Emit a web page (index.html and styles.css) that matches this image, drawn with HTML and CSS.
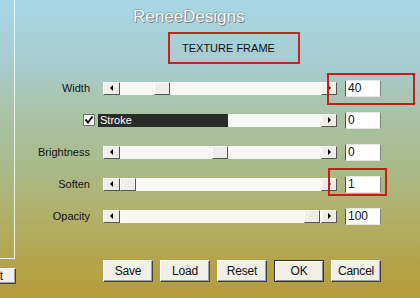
FILE: index.html
```html
<!DOCTYPE html>
<html>
<head lang="en">
    <meta charset="UTF-8">
    <title>Texture Frame</title>
    <link rel="stylesheet" href="styles.css">
</head>
<body>

<div class="window">
    <!--左侧预览区，只露出一点-->
    <div class="side">
        <div class="preview"></div>
        <button class="btn side-btn">Edit</button>
    </div>

    <div class="main">
        <div class="head">
            <div class="brand">ReneeDesigns</div>
            <div class="frame-title">TEXTURE FRAME</div>
        </div>

        <div class="rows">
            <div class="row">
                <span class="label">Width</span>
                <div class="slider">
                    <span class="arrow left"></span>
                    <div class="track"><span class="thumb" style="margin-left:34px"></span></div>
                    <span class="arrow right"></span>
                </div>
                <span class="field">40</span>
            </div>
            <div class="row">
                <span class="label">
                    <svg class="check" width="12" height="12" viewBox="0 0 12 12">
                        <rect x="0.5" y="0.5" width="11" height="11" fill="#fff" stroke="#707070"/>
                        <path d="M2.5 5.5 L5 8.5 L9.5 2.5" fill="none" stroke="#000" stroke-width="2"/>
                    </svg>
                </span>
                <div class="slider">
                    <span class="stroke-bar">Stroke</span>
                    <div class="track"></div>
                    <span class="arrow right"></span>
                </div>
                <span class="field">0</span>
            </div>
            <div class="row">
                <span class="label">Brightness</span>
                <div class="slider">
                    <span class="arrow left"></span>
                    <div class="track"><span class="thumb" style="margin-left:92px"></span></div>
                    <span class="arrow right"></span>
                </div>
                <span class="field">0</span>
            </div>
            <div class="row">
                <span class="label">Soften</span>
                <div class="slider">
                    <span class="arrow left"></span>
                    <div class="track"><span class="thumb" style="margin-left:0px"></span></div>
                    <span class="arrow right"></span>
                </div>
                <span class="field">1</span>
            </div>
            <div class="row">
                <span class="label">Opacity</span>
                <div class="slider">
                    <span class="arrow left"></span>
                    <div class="track"><span class="thumb" style="margin-left:184px"></span></div>
                    <span class="arrow right"></span>
                </div>
                <span class="field">100</span>
            </div>
        </div>

        <div class="buttons">
            <button class="btn">Save</button>
            <button class="btn">Load</button>
            <button class="btn">Reset</button>
            <button class="btn default">OK</button>
            <button class="btn">Cancel</button>
        </div>
    </div>

    <!--红框标注-->
    <div class="mark mark-width"></div>
    <div class="mark mark-soften"></div>
</div>

</body>
</html>
```

FILE: styles.css
```css
body {
    margin: 0;
}

.window {
    position: relative;
    display: flex;
    width: 420px;
    height: 298px;
    overflow: hidden;
    font-family: "Liberation Sans", Arial, sans-serif;
    color: #111;
    background: linear-gradient(180deg, #a7d7e5 0%, #a8cdd2 20%, #a9c3a7 38%, #aaba8c 55%, #b0b16a 72%, #b3a44a 88%, #b49c3a 100%);
}

/* 通用按钮 */
.btn {
    box-sizing: border-box;
    padding: 0;
    font: 12px "Liberation Sans", Arial, sans-serif;
    letter-spacing: -0.2px;
    color: #111;
    background: #f0efe8;
    border: 1px solid;
    border-color: #fff #404040 #404040 #fff;
    box-shadow: inset -1px -1px #a0a0a0;
}

/* 左侧 */
.side {
    display: flex;
    flex-direction: column;
    width: 16px;
    flex: none;
}

.preview {
    width: 14px;
    height: 258px;
    border-right: 1px solid #eef2ec;
    border-bottom: 1px solid #eef2ec;
}

.side-btn {
    width: 44px;
    height: 16px;
    margin: 9px 0 0 -28px;
    padding-right: 12px;
    text-align: right;
}

/* 主区 */
.main {
    flex: 1;
    display: flex;
    flex-direction: column;
}

.head {
    height: 72px;
}

.brand {
    margin: 0 0 0 117px;
    padding-top: 7px;
    font-size: 17px;
    line-height: 20px;
    color: #f6f6f4;
    text-shadow: 1px 1px 0 #7c8686, -1px 0 0 rgba(110, 120, 120, 0.45), 0 -1px 0 rgba(110, 120, 120, 0.35);
}

.frame-title {
    box-sizing: border-box;
    width: 132px;
    height: 32px;
    margin: 5px 0 0 152px;
    padding-left: 12px;
    font-size: 11px;
    line-height: 28px;
    border: 2px solid #c2261c;
}

.row {
    display: flex;
    align-items: center;
    height: 32px;
}

.label {
    display: flex;
    justify-content: flex-end;
    width: 74px;
    margin-right: 13px;
    font-size: 11px;
}

.check {
    margin-right: -5px;
}

.slider {
    display: flex;
    width: 234px;
    height: 13px;
    background: #f7f7f6;
}

.track {
    flex: 1;
    display: flex;
}

.arrow,
.thumb {
    box-sizing: border-box;
    display: flex;
    align-items: center;
    justify-content: center;
    height: 13px;
    background: #efeee9;
    border: 1px solid;
    border-color: #fff #555 #555 #fff;
}

.arrow {
    width: 17px;
}

.arrow.right {
    width: 16px;
}

.thumb {
    width: 16px;
}

.arrow.left::before {
    content: "";
    border-top: 3px solid transparent;
    border-bottom: 3px solid transparent;
    border-right: 3px solid #000;
}

.arrow.right::before {
    content: "";
    border-top: 3px solid transparent;
    border-bottom: 3px solid transparent;
    border-left: 3px solid #000;
}

.stroke-bar {
    width: 130px;
    margin-left: -5px;
    padding-left: 2px;
    box-sizing: border-box;
    font-size: 11px;
    line-height: 13px;
    color: #fff;
    background: #2a2a28;
}

.field {
    box-sizing: border-box;
    width: 36px;
    height: 17px;
    margin-left: 8px;
    padding-left: 2px;
    font-size: 12px;
    line-height: 15px;
    background: #fff;
    border: 1px solid;
    border-color: #e6e6e6 #808080 #e6e6e6 #505050;
}

/* 底部按钮 */
.buttons {
    display: flex;
    gap: 7px;
    margin: 28px 0 0 87px;
}

.buttons .btn {
    width: 50px;
    height: 22px;
}

.buttons .default {
    border-color: #333;
    box-shadow: inset 1px 1px #fff, inset -1px -1px #888;
}

/* 红框 */
.mark {
    position: absolute;
    box-sizing: border-box;
    border: 2px solid #c41f18;
}

.mark-width {
    left: 327px;
    top: 73px;
    width: 88px;
    height: 32px;
}

.mark-soften {
    left: 328px;
    top: 168px;
    width: 59px;
    height: 28px;
}
```
